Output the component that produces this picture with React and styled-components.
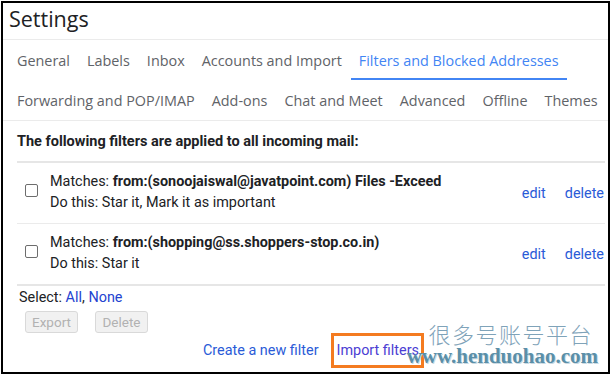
import React from 'react';
import styled, { createGlobalStyle } from 'styled-components';

const GlobalStyle = createGlobalStyle`
  html, body {
    margin: 0;
    padding: 0;
    background: #fff;
  }
  body {
    font-family: Roboto, "Liberation Sans", Arial, sans-serif;
    color: #202124;
  }
`;

const Frame = styled.div`
  position: relative;
  box-sizing: border-box;
  width: 609px;
  height: 373px;
  margin: 1px 0 0 1px;
  border: 2px solid #000;
  overflow: hidden;
`;

const Title = styled.div`
  height: 37px;
  padding: 0 0 5px 6px;
  box-sizing: border-box;
  display: flex;
  align-items: center;
  font-family: "Open Sans", Roboto, sans-serif;
  font-size: 21.5px;
  color: #202124;
  border-bottom: 1px solid #ebebeb;
`;

const Tabs = styled.div`
  padding-left: 6px;
  border-bottom: 1px solid #ebebeb;
`;

const TabRow = styled.div`
  display: flex;
  height: 40px;
`;

const Tab = styled.div`
  display: flex;
  align-items: center;
  padding: 0 8px;
  margin-right: 1px;
  font-family: "Open Sans", Roboto, sans-serif;
  font-size: 14.4px;
  color: ${(p) => (p.active ? '#4285f4' : '#5f6368')};
  box-shadow: ${(p) => (p.active ? 'inset 0 -2px 0 #4285f4' : 'none')};
  white-space: nowrap;
`;

const Content = styled.div`
  padding: 0 3px 0 14px;
`;

const Heading = styled.div`
  height: 40px;
  display: flex;
  align-items: center;
  font-size: 14.5px;
  font-weight: 700;
  border-bottom: 2px solid #e6e6e6;
`;

const FilterRow = styled.div`
  display: flex;
  align-items: center;
  height: 60px;
  border-bottom: ${(p) => (p.last ? '2px solid #e6e6e6' : '1px solid #ebebeb')};
`;

const Check = styled.div`
  box-sizing: border-box;
  width: 13px;
  height: 13px;
  margin: 0 12px 6px 8px;
  border: 1.5px solid #6d6d6d;
  border-radius: 2px;
  flex-shrink: 0;
`;

const Details = styled.div`
  flex: 1;
  display: flex;
  flex-direction: column;
  gap: 4px;
  font-size: 14.4px;
  line-height: 17px;
  color: #202124;
  margin-top: -2px;
`;

const Actions = styled.div`
  display: flex;
  gap: 19px;
  padding-right: 1px;
`;

const Link = styled.span`
  color: ${(p) => p.color || '#2a5bd7'};
  font-size: 14.4px;
`;

const SelectLine = styled.div`
  font-size: 14.4px;
  padding: 3px 0 0 2px;
  line-height: 17px;
`;

const ButtonRow = styled.div`
  display: flex;
  gap: 17px;
  margin: 5px 0 0 8px;
`;

const Button = styled.div`
  box-sizing: border-box;
  width: 53px;
  height: 22px;
  display: flex;
  align-items: center;
  justify-content: center;
  border: 1px solid #d9d9d9;
  border-radius: 3px;
  background: #f1f1f1;
  color: #b2b2b2;
  font-size: 13.5px;
`;

const Footer = styled.div`
  display: flex;
  justify-content: center;
  align-items: center;
  gap: 12px;
  padding-left: 5px;
`;

const Highlight = styled.span`
  display: inline-block;
  border: 3px solid #f47b20;
  padding: 5px 2px 5px 3px;
  line-height: 18px;
`;

const Watermark = styled.div`
  position: absolute;
  right: 10px;
  bottom: 5px;
  display: flex;
  flex-direction: column;
  align-items: flex-end;
  pointer-events: none;
`;

const WatermarkCn = styled.div`
  font-family: "Noto Sans CJK SC", sans-serif;
  font-weight: 300;
  font-size: 22px;
  line-height: 24px;
  letter-spacing: 1.5px;
  color: #7fa3b9;
  margin-right: 5px;
`;

const WatermarkUrl = styled.div`
  font-family: "Liberation Serif", serif;
  font-weight: 700;
  font-size: 21px;
  line-height: 22px;
  color: #5a8fa8;
  text-shadow: 1px 1px 0 #c9d9e2;
`;

const tabsTop = [
  'General',
  'Labels',
  'Inbox',
  'Accounts and Import',
  'Filters and Blocked Addresses',
];
const tabsBottom = ['Forwarding and POP/IMAP', 'Add-ons', 'Chat and Meet', 'Advanced', 'Offline', 'Themes'];

const filters = [
  {
    from: 'from:(sonoojaiswal@javatpoint.com) Files -Exceed',
    action: 'Star it, Mark it as important',
  },
  { from: 'from:(shopping@ss.shoppers-stop.co.in)', action: 'Star it', last: true },
];

export default function App() {
  return (
    <>
      <GlobalStyle />
      <Frame>
        <Title>Settings</Title>
        <Tabs>
          <TabRow>
            {tabsTop.map((t) => (
              <Tab key={t} active={t.startsWith('Filters')}>
                {t}
              </Tab>
            ))}
          </TabRow>
          <TabRow>
            {tabsBottom.map((t) => (
              <Tab key={t}>{t}</Tab>
            ))}
          </TabRow>
        </Tabs>
        <Content>
          <Heading>The following filters are applied to all incoming mail:</Heading>
          {filters.map((f) => (
            <FilterRow key={f.from} last={f.last}>
              <Check />
              <Details>
                <div>
                  Matches: <b>{f.from}</b>
                </div>
                <div>Do this: {f.action}</div>
              </Details>
              <Actions>
                <Link>edit</Link>
                <Link>delete</Link>
              </Actions>
            </FilterRow>
          ))}
          <SelectLine>
            Select: <Link color="#2343d0">All</Link>, <Link color="#2343d0">None</Link>
          </SelectLine>
          <ButtonRow>
            <Button>Export</Button>
            <Button>Delete</Button>
          </ButtonRow>
          <Footer>
            <Link color="#2a5bd7">Create a new filter</Link>
            <Highlight>
              <Link color="#4b3ed3">Import filters</Link>
            </Highlight>
          </Footer>
        </Content>
        <Watermark>
          <WatermarkCn>很多号账号平台</WatermarkCn>
          <WatermarkUrl>www.henduohao.com</WatermarkUrl>
        </Watermark>
      </Frame>
    </>
  );
}
